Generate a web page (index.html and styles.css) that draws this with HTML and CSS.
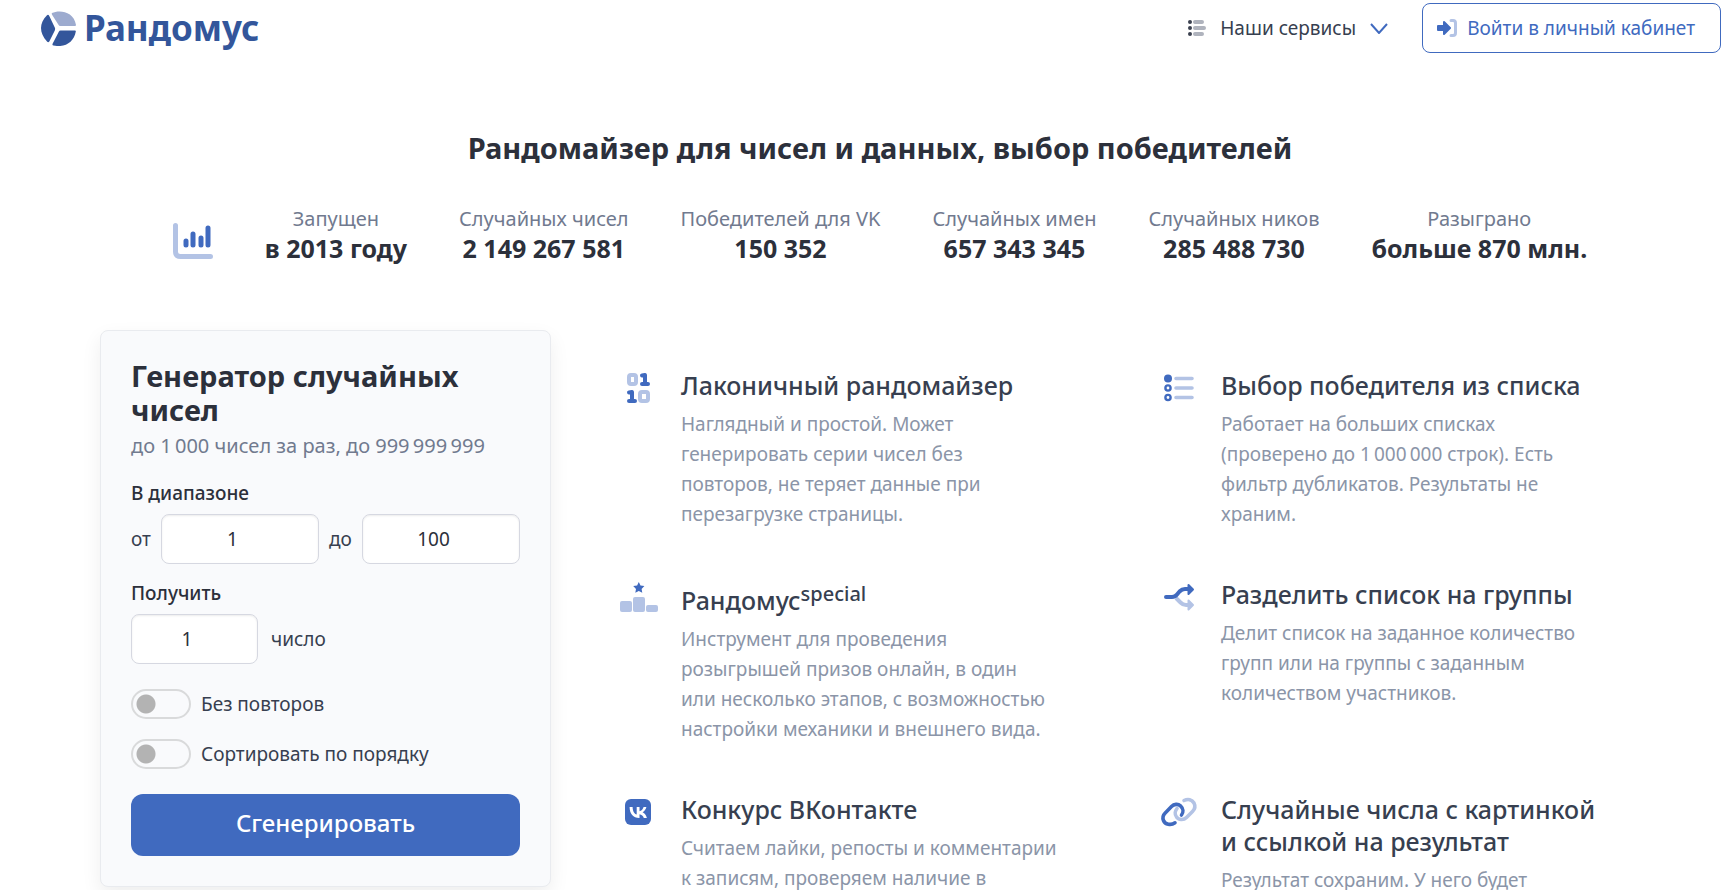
FILE: index.html
```
<!DOCTYPE html>
<html lang="ru">
<head>
    <meta charset="UTF-8">
    <meta name="viewport" content="width=device-width, initial-scale=1.0">
    <title>Рандомус</title>
    <link rel="stylesheet" href="styles.css">
</head>
<body>
    <!-- Шапка -->
    <header class="navbar">
        <a href="#" class="logo">
            <svg width="35" height="35" viewBox="0 0 35 35">
                <path fill="#9dabcf" d="M11 2C18-1.5 33 0 35 14Q35 15 34 15H19.5Q18 15 17.3 13.5L11.2 4Q10.4 2.6 11 2Z"/>
                <path fill="#33569b" d="M6 4.3Q7.2 3 8.3 4.9L14 17Q14.3 18 13.8 19.5L8.3 30.5Q7.2 32 6 30.5C-2 22-2 12 6 4.3Z"/>
                <path fill="#33569b" d="M19.5 19.5H34Q35 19.5 34.8 20.5C33 31 24 37 12.5 34.5Q11 34 11.6 32.8L17.8 20.8Q18.4 19.5 19.5 19.5Z"/>
            </svg>
            <span>Рандомус</span>
        </a>
        <nav class="nav-menu">
            <a href="#" class="services">
                <svg width="18" height="18" viewBox="0 0 18 18">
                    <g fill="#3b4150"><circle cx="2" cy="3" r="2"/><circle cx="2" cy="9" r="2"/><circle cx="2" cy="15" r="2"/></g>
                    <path stroke="#afb3bd" stroke-width="4" stroke-linecap="round" d="M7 3H14M7 9H16M7 15H14"/>
                </svg>
                <span>Наши сервисы</span>
                <svg width="18" height="12" viewBox="0 0 18 12">
                    <path fill="none" stroke="#406abf" stroke-width="2" d="M1 2L9 11L17 2"/>
                </svg>
            </a>
            <a href="#" class="login">
                <svg width="20" height="18" viewBox="0 0 20 18">
                    <path fill="none" stroke="#b3c3e5" stroke-width="3" stroke-linecap="round" d="M14 1.5H16Q18.5 1.5 18.5 4V14Q18.5 16.5 16 16.5H14"/>
                    <path fill="#406abf" stroke="#406abf" stroke-width="2" stroke-linejoin="round" d="M1 7H7V3L13 9L7 15V11H1Z"/>
                </svg>
                <span>Войти в личный кабинет</span>
            </a>
        </nav>
    </header>

    <main>
        <h1>Рандомайзер для чисел и данных, выбор победителей</h1>

        <!-- Статистика -->
        <div class="stats">
            <svg class="stats-icon" width="40" height="36" viewBox="0 0 40 36">
                <path fill="none" stroke="#b3c3e5" stroke-width="5" stroke-linecap="round" d="M2.5 2.5V28.5Q2.5 33.5 7.5 33.5H37.5"/>
                <path stroke="#406abf" stroke-width="5" stroke-linecap="round" d="M13 18V22M20 11V22M28 15V22M35 5V22"/>
            </svg>
            <div class="stat"><span>Запущен</span><b>в 2013 году</b></div>
            <div class="stat"><span>Случайных чисел</span><b>2 149 267 581</b></div>
            <div class="stat"><span>Победителей для VK</span><b>150 352</b></div>
            <div class="stat"><span>Случайных имен</span><b>657 343 345</b></div>
            <div class="stat"><span>Случайных ников</span><b>285 488 730</b></div>
            <div class="stat"><span>Разыграно</span><b>больше 870 млн.</b></div>
        </div>

        <div class="content">
            <!-- Генератор -->
            <form class="card">
                <h2>Генератор случайных чисел</h2>
                <p class="card-note">до 1&#8239;000 чисел за раз, до 999&#8239;999&#8239;999</p>

                <div class="caption">В диапазоне</div>
                <div class="range">
                    <label for="from">от</label>
                    <input type="number" id="from" value="1">
                    <label for="to">до</label>
                    <input type="number" id="to" value="100">
                </div>

                <label class="caption" for="count">Получить</label>
                <div class="count">
                    <input type="number" id="count" value="1">
                    <span>число</span>
                </div>

                <div class="switches">
                    <label class="switch"><input type="checkbox"> Без повторов</label>
                    <label class="switch"><input type="checkbox"> Сортировать по порядку</label>
                </div>

                <button type="button">Сгенерировать</button>
            </form>

            <!-- Сервисы -->
            <div class="features">
                <div class="feature">
                    <svg width="54" height="40" viewBox="0 0 54 40" fill="none">
                        <g stroke="#b3c3e5" stroke-width="4"><rect x="18" y="6" width="7" height="9" rx="2"/><rect x="29" y="23" width="8" height="9" rx="2"/></g>
                        <path stroke="#406abf" stroke-width="4" stroke-linecap="round" stroke-linejoin="round" d="M31 6.5L34 6V15M31 15H37M18 23.5L21 23V32M18 32H24"/>
                    </svg>
                    <div class="feature-text">
                        <h3>Лаконичный рандомайзер</h3>
                        <p>Наглядный и простой. Может генерировать серии чисел без<br> повторов, не теряет данные при перезагрузке страницы.</p>
                    </div>
                </div>
                <div class="feature">
                    <svg width="54" height="40" viewBox="0 0 54 40" fill="none">
                        <circle cx="17" cy="9.5" r="4" fill="#406abf"/>
                        <g stroke="#406abf" stroke-width="2.4"><circle cx="17" cy="19" r="2.6"/><circle cx="17" cy="28.5" r="2.6"/></g>
                        <path stroke="#b3c3e5" stroke-width="3.6" stroke-linecap="round" d="M25 9.5H41M25 19H41M25 28.5H41"/>
                    </svg>
                    <div class="feature-text">
                        <h3>Выбор победителя из списка</h3>
                        <p>Работает на больших списках (проверено до 1&#8239;000&#8239;000 строк). Есть фильтр дубликатов. Результаты не храним.</p>
                    </div>
                </div>
                <div class="feature">
                    <svg width="54" height="40" viewBox="0 0 54 40">
                        <g fill="#b3c3e5"><rect x="9" y="23" width="12" height="11" rx="2"/><rect x="22" y="19" width="12" height="15" rx="2"/><rect x="35" y="27" width="12" height="7" rx="2"/></g>
                        <path fill="#406abf" d="M27.8 4L29.5 7.6L33.4 8.1L30.6 10.9L31.3 14.8L27.8 13L24.3 14.8L25 10.9L22.2 8.1L26.1 7.6Z"/>
                    </svg>
                    <div class="feature-text">
                        <h3>Рандомус<sup>special</sup></h3>
                        <p>Инструмент для проведения розыгрышей призов онлайн, в один<br> или несколько этапов, с возможностью настройки механики и внешнего вида.</p>
                    </div>
                </div>
                <div class="feature">
                    <svg width="54" height="40" viewBox="0 0 54 40" fill="none">
                        <path stroke="#b3c3e5" stroke-width="4" d="M25 20L29.5 24.5Q32 27 35 27H38"/>
                        <path fill="#b3c3e5" stroke="#b3c3e5" stroke-width="2" stroke-linejoin="round" d="M37.5 22.5L42 27L37.5 31.5Z"/>
                        <path stroke="#406abf" stroke-width="4" stroke-linecap="round" d="M15 19H21Q24 19 26 16.5L28.5 13.5Q31 11 34 11H37"/>
                        <path fill="#406abf" stroke="#406abf" stroke-width="2" stroke-linejoin="round" d="M37.5 7L42 11.5L37.5 16Z"/>
                    </svg>
                    <div class="feature-text">
                        <h3>Разделить список на группы</h3>
                        <p>Делит список на заданное количество групп или на группы с заданным количеством участников.</p>
                    </div>
                </div>
                <div class="feature">
                    <svg width="54" height="40" viewBox="0 0 54 40">
                        <rect x="14" y="6" width="26" height="26" rx="6" fill="#406abf"/>
                        <path fill="#fff" d="M28.2 25C22.2 25 18.7 20.9 18.6 14H21.6C21.7 19 23.9 21.1 25.7 21.6V14H28.5V18.3C30.2 18.1 32 16.2 32.6 14H35.4C34.9 16.6 33 18.5 31.6 19.3C33 19.9 35.1 21.6 35.9 25H32.8C32.2 22.9 30.5 21.4 28.5 21.2V25Z"/>
                    </svg>
                    <div class="feature-text">
                        <h3>Конкурс ВКонтакте</h3>
                        <p>Считаем лайки, репосты и комментарии к записям, проверяем наличие в</p>
                    </div>
                </div>
                <div class="feature">
                    <svg width="54" height="40" viewBox="0 0 54 40" fill="none" stroke-width="3.6" stroke-linecap="round">
                        <path stroke="#b3c3e5" d="M33 7.5C37 5.5 41 6.5 43 10C44.5 13 44 16 41.5 18.5L35.5 24.5C32.5 27.5 27.5 27 25.5 24C23.5 21.5 24 18 26 15.5"/>
                        <path stroke="#406abf" d="M24 29.8C20 32.5 14 31.5 12.5 27.5C11.3 24.5 12.2 22 14 20.2L20.5 13.5C23 11 27 10.6 29.5 12.8C32.5 15.5 32.5 19.5 30.5 22"/>
                    </svg>
                    <div class="feature-text">
                        <h3>Случайные числа с картинкой и ссылкой на результат</h3>
                        <p>Результат сохраним. У него будет</p>
                    </div>
                </div>
            </div>
        </div>
    </main>
</body>
</html>
```
FILE: styles.css
```
/* Reset */
* {
    margin: 0;
    padding: 0;
    box-sizing: border-box;
}

body {
    font-family: "Noto Sans", sans-serif;
    font-size: 19px;
    line-height: 30px;
    color: #373f50;
    background-color: #fff;
}

a {
    color: inherit;
    text-decoration: none;
}

svg {
    display: block;
    flex-shrink: 0;
}

/* Шапка */
.navbar {
    display: flex;
    justify-content: space-between;
    align-items: center;
    height: 56px;
    padding: 0 9px 0 41px;
}

.logo {
    display: flex;
    align-items: center;
    gap: 8px;
    font-size: 35px;
    line-height: 28px;
    font-weight: 700;
    color: #33569b;
}

.nav-menu {
    display: flex;
    align-items: center;
    gap: 34px;
}

.services {
    display: flex;
    align-items: center;
    gap: 14px;
}

.login {
    display: flex;
    align-items: center;
    gap: 10px;
    height: 50px;
    padding: 0 25px 0 14px;
    border: 1px solid #406abf;
    border-radius: 8px;
    color: #406abf;
}

/* Заголовок и статистика */
main {
    padding: 74px 0 0 30px;
}

h1 {
    text-align: center;
    font-size: 29px;
    line-height: 36px;
    font-weight: 700;
    color: #2c303b;
}

.stats {
    display: flex;
    justify-content: center;
    align-items: flex-end;
    gap: 52px;
    margin-top: 39px;
}

.stats-icon {
    margin-bottom: 4px;
}

.stat {
    text-align: center;
}

.stat span {
    display: block;
    font-size: 20px;
    line-height: 28px;
    color: #717a8f;
}

.stat b {
    display: block;
    font-size: 25px;
    font-weight: 700;
    color: #2c303b;
}

/* Основная часть */
.content {
    display: grid;
    grid-template-columns: 451px 1fr;
    align-items: start;
    gap: 60px;
    padding: 67px 39px 0 70px;
}

.card {
    padding: 28px 30px 30px;
    background: #f9fafc;
    border: 1px solid #e9ebef;
    border-radius: 8px;
    box-shadow: 0 8px 20px rgba(0, 0, 0, 0.07);
}

.card h2 {
    font-size: 29px;
    line-height: 34px;
    font-weight: 700;
    color: #2c303b;
}

.card-note {
    margin: 4px 0 17px;
    font-size: 20px;
    color: #717a8f;
}

.caption {
    display: block;
    margin: 14px 0 6px;
    font-weight: 500;
    color: #2c303b;
}

.range {
    display: flex;
    align-items: center;
    gap: 10px;
}

.range input {
    flex: 1;
    min-width: 0;
}

.count {
    display: flex;
    align-items: center;
    gap: 13px;
}

.count input {
    width: 127px;
}

input[type="number"] {
    height: 50px;
    padding: 0 12px;
    border: 1px solid #d6d8e1;
    border-radius: 8px;
    background: #fff;
    box-shadow: inset 0 1px 2px rgba(0, 0, 0, 0.08);
    font: inherit;
    color: #2c303b;
    text-align: center;
}

/* Переключатели */
.switches {
    display: flex;
    flex-direction: column;
    gap: 20px;
    margin: 25px 0;
}

.switch {
    display: flex;
    align-items: center;
    gap: 10px;
}

.switch input {
    appearance: none;
    width: 60px;
    height: 30px;
    border: 2px solid #d9dadb;
    border-radius: 15px;
    background: radial-gradient(circle at 13px 13px, #b3b3b3 9px, transparent 10px);
}

.switch input:checked {
    border-color: #406abf;
    background: radial-gradient(circle at 43px 13px, #406abf 9px, transparent 10px);
}

button {
    display: block;
    width: 100%;
    height: 62px;
    padding-bottom: 6px;
    border: none;
    border-radius: 12px;
    background: #406abf;
    color: #fff;
    font-family: inherit;
    font-size: 24px;
    font-weight: 500;
    cursor: pointer;
}

/* Сервисы */
.features {
    display: grid;
    grid-template-columns: 1fr 1fr;
    padding-top: 39px;
}

.feature {
    display: flex;
    gap: 16px;
    padding: 0 88px 49px 0;
}

.feature h3 {
    margin-bottom: 8px;
    font-size: 25px;
    line-height: 32px;
    font-weight: 500;
    color: #373f50;
}

.feature sup {
    font-size: 20px;
}

.feature p {
    color: #8b95a8;
}
```
